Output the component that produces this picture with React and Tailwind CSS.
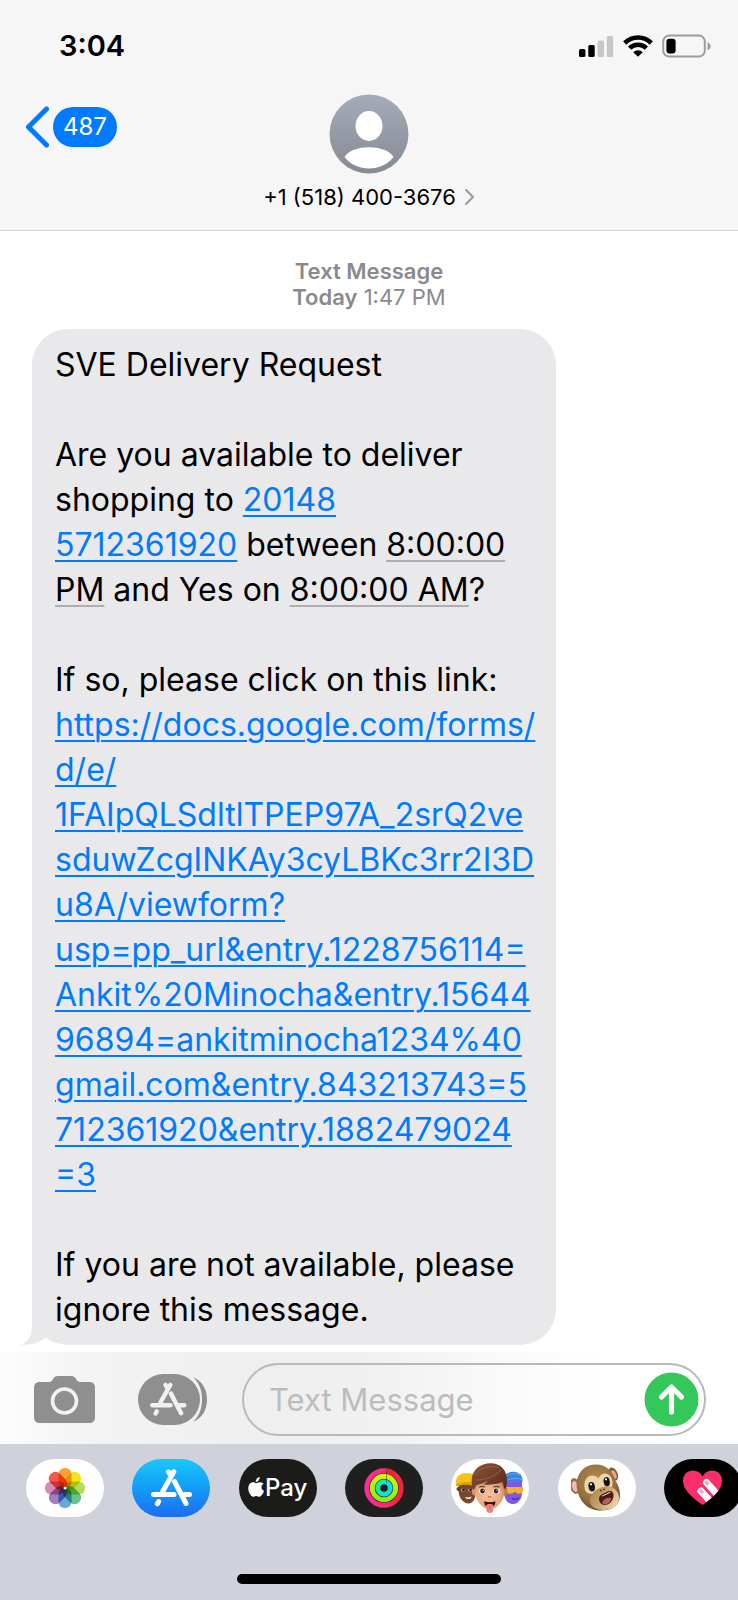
import React from "react";

const MESSAGE_LINK = [
  "https://docs.google.com/forms/",
  "d/e/",
  "1FAIpQLSdltlTPEP97A_2srQ2ve",
  "sduwZcgINKAy3cyLBKc3rr2I3D",
  "u8A/viewform?",
  "usp=pp_url&entry.1228756114=",
  "Ankit%20Minocha&entry.15644",
  "96894=ankitminocha1234%40",
  "gmail.com&entry.843213743=5",
  "712361920&entry.1882479024",
  "=3",
];

const LINK = "text-[#007aff] underline decoration-2 underline-offset-4";
const DATE_LINK = "underline decoration-2 underline-offset-4 decoration-[#aeaeb0]";

function StatusBar() {
  return (
    <div className="flex items-center justify-between pl-[59px] pr-[27px] pt-[30px]">
      <time className="text-[29px] leading-[32px] font-semibold">3:04</time>
      <div className="flex items-center gap-[9px]">
        <svg width="36" height="24" viewBox="0 0 36 24" aria-hidden="true">
          <rect x="1" y="15" width="6.4" height="8" rx="1.6" fill="#000" />
          <rect x="10.3" y="11" width="6.4" height="12" rx="1.6" fill="#000" />
          <rect x="19.6" y="6.5" width="6.4" height="16.5" rx="1.6" fill="#c6c6c7" />
          <rect x="28.8" y="2" width="6.4" height="21" rx="1.6" fill="#c6c6c7" />
        </svg>
        <svg width="30" height="24" viewBox="0 0 30 24" aria-hidden="true">
          <g fill="none" stroke="#000" strokeWidth="4.6">
            <path d="M1.7 9a19 19 0 0 1 26.6 0" />
            <path d="M6.600 14.200a12 12 0 0 1 16.800 0" />
          </g>
          <path d="M15 22.800l-4.800-4.600a6.900 6.900 0 0 1 9.600 0z" fill="#000" />
        </svg>
        <svg width="49" height="24" viewBox="0 0 49 24" aria-hidden="true">
          <rect x="1.2" y="1.6" width="41.600" height="21" rx="6" fill="none" stroke="#9c9c9d" strokeWidth="2" />
          <rect x="4.400" y="4.700" width="9.200" height="14.800" rx="3" fill="#000" />
          <path d="M45.600 8.200c2 .8 3 2.200 3 4s-1 3.200-3 4z" fill="#9c9c9d" />
        </svg>
      </div>
    </div>
  );
}

function ConversationHeader() {
  return (
    <header className="border-b border-[#d2d2d3] bg-[#f6f6f6]">
      <StatusBar />
      <div className="grid grid-cols-[1fr_auto_1fr] items-start pt-8 pb-[18px]">
        <button type="button" className="ml-[25px] mt-3 flex items-center gap-1 justify-self-start text-white">
          <svg width="24" height="42" viewBox="0 0 24 42" aria-hidden="true">
            <path d="M21.500 3L3.500 21l18 18" fill="none" stroke="#007aff" strokeWidth="5" strokeLinecap="round" strokeLinejoin="round" />
          </svg>
          <span className="rounded-full bg-[#007aff] px-[10px] text-[24px] leading-[40px]">487</span>
        </button>
        <button type="button" className="flex flex-col items-center gap-2">
          <svg width="80" height="80" viewBox="0 0 80 80" aria-hidden="true">
            <defs>
              <linearGradient id="avatar" x1="0" y1="0" x2="0" y2="1">
                <stop offset="0" stopColor="#a5abb9" />
                <stop offset="1" stopColor="#858a93" />
              </linearGradient>
            </defs>
            <circle cx="40" cy="40" r="39.500" fill="url(#avatar)" />
            <ellipse cx="40" cy="32" rx="13.500" ry="15" fill="#fff" />
            <path d="M15.500 63c4-6.500 13.500-9.800 24.500-9.800S60.500 56.500 64.500 63C58.500 70.500 50 74.500 40 74.500S21.500 70.500 15.500 63z" fill="#fff" />
          </svg>
          <span className="flex items-center gap-2 text-[22px] leading-[30px]">
            +1 (518) 400-3676
            <svg width="11" height="18" viewBox="0 0 11 18" aria-hidden="true">
              <path d="M2 2l7 7-7 7" fill="none" stroke="#9a9a9c" strokeWidth="2" strokeLinecap="round" strokeLinejoin="round" />
            </svg>
          </span>
        </button>
      </div>
    </header>
  );
}

function Bubble() {
  return (
    <article className="relative ml-8 w-[524px] rounded-[36px] bg-[#e9e9eb] py-[13px] pl-[23px] text-[32px] leading-[45px] whitespace-nowrap">
      <svg className="absolute bottom-0 -left-[11px]" width="50" height="40" viewBox="0 0 50 40" aria-hidden="true">
        <path d="M11 0v20c0 10-3 17-11 19.500 9 1 18-1.500 24-6.500 8 5 16 7 26 7V0z" fill="#e9e9eb" />
        <path d="M11 40h39c-10 0-18-2-25-7-5 4-9 6-14 7z" fill="#fff" />
      </svg>
      <p className="relative">SVE Delivery Request</p>
      <p className="relative pt-[45px]">
        Are you available to deliver
        <br />
        shopping to{" "}
        <a href="tel:201485712361920" className={LINK}>
          20148
          <br />
          5712361920
        </a>{" "}
        between{" "}
        <a href="#evening" className={DATE_LINK}>
          8:00:00
          <br />
          PM
        </a>{" "}
        and Yes on{" "}
        <a href="#morning" className={DATE_LINK}>
          8:00:00 AM
        </a>
        ?
      </p>
      <p className="relative pt-[45px]">
        If so, please click on this link:
        <br />
        <a href={MESSAGE_LINK.join("")} className={LINK}>
          {MESSAGE_LINK.map((line) => (
            <React.Fragment key={line}>
              {line}
              <br />
            </React.Fragment>
          ))}
        </a>
      </p>
      <p className="relative pt-[45px]">
        If you are not available, please
        <br />
        ignore this message.
      </p>
    </article>
  );
}

function StoreGlyph({ color }) {
  return (
    <g fill="none" stroke={color} strokeWidth="5" strokeLinecap="round">
      <path d="M17.500 2.800L19.600 6.200" />
      <path d="M22.800 2.800L11.800 22.300" />
      <path d="M2.500 25.500H23" />
      <path d="M33.500 25.500H38.500" />
      <path d="M7.600 32.500L6.300 34.800" />
      <path d="M23.500 12.500L35 34.500" />
    </g>
  );
}

function Composer() {
  return (
    <form
      className="flex items-center bg-[linear-gradient(90deg,#fdfdfd_0%,#f3f3f3_12%,#efefef_35%,#f1f1f1_52%,#fafafa_68%,#ffffff_82%)] pt-[11px] pb-2 pl-[34px] pr-8"
      onSubmit={(e) => e.preventDefault()}
    >
      <button type="button" aria-label="Camera">
        <svg width="61" height="48" viewBox="0 0 61 48">
          <path d="M6 6h9c2 0 3-1 4-3s2.500-3 5-3h13c2.500 0 4 1 5 3s2 3 4 3h9c4 0 6 2 6 6v29c0 4-2 6-6 6H6c-4 0-6-2-6-6V12c0-4 2-6 6-6z" fill="#8f8f8f" />
          <circle cx="30.500" cy="25" r="12" fill="none" stroke="#f2f2f2" strokeWidth="3.600" />
        </svg>
      </button>
      <button type="button" aria-label="Apps" className="ml-[43px]">
        <svg width="70" height="51" viewBox="0 0 70 51">
          <rect x="0" y="0" width="62" height="51" rx="25.500" fill="#8f8f8f" />
          <path d="M55 3C64 7 69 15 69 25.500S64 44 55 48c6-6 9-13 9-22.500S61 9 55 3z" fill="#8f8f8f" />
          <g transform="translate(12 8.500) scale(.89)">
            <StoreGlyph color="#f1f1f1" />
          </g>
        </svg>
      </button>
      <div className="ml-[34px] flex min-w-0 flex-1 items-center rounded-full border-2 border-[#b9b9bb] py-[7px] pl-[25px] pr-[5px]">
        <input
          type="text"
          aria-label="Text Message"
          placeholder="Text Message"
          className="min-w-0 flex-1 bg-transparent text-[31px] leading-[40px] outline-none placeholder:text-[#bcbcbe]"
        />
        <button type="submit" aria-label="Send">
          <svg width="55" height="55" viewBox="0 0 55 55">
            <circle cx="27.500" cy="27.500" r="27" fill="#34c759" />
            <path d="M27.500 40V15.500M17.500 25L27.500 15l10 10" fill="none" stroke="#fff" strokeWidth="5.200" strokeLinecap="round" strokeLinejoin="round" />
          </svg>
        </button>
      </div>
    </form>
  );
}

const PETALS = [
  ["#f8a130", 0],
  ["#f0e420", 45],
  ["#b8da58", 90],
  ["#66c290", 135],
  ["#64a8de", 180],
  ["#9c80c0", 225],
  ["#d68cb2", 270],
  ["#f25a4a", 315],
];

function Photos() {
  return (
    <svg width="42" height="42" viewBox="-21 -21 42 42" className="isolate">
      {PETALS.map(([color, angle]) => (
        <rect key={angle} x="-6.500" y="-20" width="13" height="20" rx="6" fill={color} transform={`rotate(${angle})`} className="mix-blend-multiply" />
      ))}
      <circle r="1.500" fill="#fff" />
    </svg>
  );
}

function Store() {
  return (
    <svg width="41" height="38" viewBox="0 0 41 38">
      <StoreGlyph color="#fff" />
    </svg>
  );
}

function ApplePay() {
  return (
    <span className="flex items-center text-[24px] leading-[30px] font-medium text-white">
      <svg width="17" height="20" viewBox="0 0 17 20" aria-hidden="true" className="mb-[3px]">
        <path
          d="M11.700 0c.2 1.300-.3 2.500-1.100 3.500C9.800 4.400 8.800 5 7.700 4.900c-.1-1.200.4-2.400 1.100-3.300C9.600.7 10.800.1 11.700 0zM15.600 6.800c-1.300.8-2.100 2-2.100 3.500 0 1.700 1 3.100 2.600 3.700-.4 1.200-1 2.300-1.700 3.300-.8 1.100-1.700 2.400-3 2.400s-1.700-.8-3.100-.8-1.900.8-3.100.8-2.200-1.200-3.100-2.400C.4 14.800-.5 10.500 1.100 7.700 2 6.200 3.400 5.300 5 5.300c1.300 0 2.500.9 3.300.9s2.200-1.100 3.900-.9c1.400.1 2.600.6 3.400 1.500z"
          fill="#fff"
        />
      </svg>
      Pay
    </span>
  );
}

function Rings() {
  return (
    <svg width="40" height="40" viewBox="0 0 40 40">
      <defs>
        <linearGradient id="ringRed" x1="0" x2="1">
          <stop offset="0" stopColor="#fb2d9c" />
          <stop offset=".5" stopColor="#f92a78" />
          <stop offset="1" stopColor="#f0263a" />
        </linearGradient>
        <linearGradient id="ringGreen" x1="0" y1="0" x2="0" y2="1">
          <stop offset="0" stopColor="#cdf80a" />
          <stop offset="1" stopColor="#8eea12" />
        </linearGradient>
        <linearGradient id="ringBlue" x1="0" x2="1">
          <stop offset="0" stopColor="#12f0a8" />
          <stop offset="1" stopColor="#12d9ec" />
        </linearGradient>
      </defs>
      <g fill="none" strokeWidth="4.900">
        <circle cx="20" cy="20" r="17.200" stroke="url(#ringRed)" />
        <circle cx="20" cy="20" r="11.700" stroke="url(#ringGreen)" />
        <circle cx="20" cy="20" r="6.200" stroke="url(#ringBlue)" />
      </g>
      <path d="M22.500 .6A19.600 19.600 0 0 1 33 5.400L29.600 8.900A14.800 14.800 0 0 0 22.500 5.500z" fill="#f0222c" />
      <path d="M22.500 .4v14.500" stroke="#1f3a20" strokeOpacity=".5" />
    </svg>
  );
}

function Memoji() {
  return (
    <svg width="70" height="52" viewBox="0 0 70 52">
      <defs>
        <linearGradient id="hair" x1="0" y1="0" x2="1" y2="1">
          <stop offset="0" stopColor="#8a5138" />
          <stop offset=".5" stopColor="#74402b" />
          <stop offset="1" stopColor="#4e2718" />
        </linearGradient>
        <radialGradient id="skin" cx=".45" cy=".5" r=".6">
          <stop offset="0" stopColor="#f6c39c" />
          <stop offset=".7" stopColor="#e8aa7e" />
          <stop offset="1" stopColor="#c98256" />
        </radialGradient>
      </defs>
      <path d="M3.500 22h17v10c0 5-3 9.500-7 9.500-5 0-10-6-10-13z" fill="#78462c" />
      <circle cx="3.500" cy="27" r="2" fill="#6b3d25" />
      <path d="M1 23.500C-.5 15 5 11 12 11c6 0 9 3 9 8v6C14 20.500 8 20.500 1 23.500z" fill="#f6c414" />
      <path d="M1 22.500c6-3 14-3 20-1v3c-7-2-13-2.500-20 0z" fill="#dca40c" />
      <ellipse cx="8.200" cy="28" rx="2" ry="1.600" fill="#f6efe8" />
      <ellipse cx="15.200" cy="28" rx="2" ry="1.600" fill="#f6efe8" />
      <circle cx="8.500" cy="28" r="1.400" fill="#20130c" />
      <circle cx="15.500" cy="28" r="1.400" fill="#20130c" />
      <path d="M10 35c3 .8 5 .6 6.500-.8 0 3.500-5 3.800-6.500.8z" fill="#fff" />
      <path d="M49 14c4-5 17-4 18 4v13c0 6-4 11-9 11-6 0-9-6-9-12z" fill="#7c5ae2" />
      <path d="M49 17c0-9 17-10 18.500 0v3H49z" fill="#3b80e4" />
      <path d="M52 14c4-3 9-3 14-1M53 18c4-2 9-2 14-1" stroke="#6aaaf8" fill="none" />
      <path d="M50 25h18v4.500c-2 3-6 3-8 0-3 3-7 3-10 0z" fill="#f8b127" />
      <path d="M57 36.500q4 2 7-1" stroke="#4d2fb0" strokeWidth="1.500" fill="none" />
      <ellipse cx="19.500" cy="29.500" rx="2.600" ry="4" fill="#d8946a" />
      <ellipse cx="50" cy="29.500" rx="2.400" ry="4" fill="#c27850" />
      <path d="M20 19h29.500v10c0 5-2 9.500-5.500 13.500-2.500 3-5.500 4.500-9.200 4.500s-6.700-1.500-9.300-4.500C22 38.500 20 34 20 29z" fill="url(#skin)" />
      <path d="M18.500 28C15 20 16.500 11 22 6 29 0 42-.5 47.500 6c5 5 5.500 14 3 21.500l-1.800-2c0-2-.5-4-1.700-5.500C41 22.500 35 23 28 22.500c2-.8 3.500-1.800 4.500-3.500-4 2.500-8 3.500-11.200 4-.8 1.500-1 3-2.800 5z" fill="url(#hair)" />
      <path d="M20 13C24 6 34 3 44 5.500M21 18c8 0 19-3 25-10" stroke="#986046" fill="none" />
      <path d="M24 25.300q3-1.600 6-.4M38.500 24.900q3-1.200 6 .4" stroke="#6b3a22" strokeWidth="1.100" fill="none" />
      <ellipse cx="27.200" cy="29" rx="3.300" ry="2.700" fill="#fff" />
      <ellipse cx="41.400" cy="29" rx="3.300" ry="2.700" fill="#fff" />
      <circle cx="27.500" cy="29" r="2.400" fill="#3c2013" />
      <circle cx="41.100" cy="29" r="2.400" fill="#3c2013" />
      <circle cx="28.300" cy="28.200" r=".6" fill="#fff" />
      <circle cx="41.900" cy="28.200" r=".6" fill="#fff" />
      <path d="M32.800 34.500q1.800 1.200 3.600 0" stroke="#b87048" strokeWidth="1.200" fill="none" />
      <path d="M29.300 39.300q5.700 1.800 11 0c.2 4-1.800 6-5.500 6s-5.700-2-5.500-6z" fill="#3c0f0d" />
      <path d="M31.300 43c.8-1.300 6.200-1.300 7 0v4.700c0 4.300-7 4.300-7 0z" fill="#f27f7d" />
      <path d="M34.800 43.500v4" stroke="#d25e60" strokeWidth=".8" />
    </svg>
  );
}

function Monkey() {
  return (
    <svg width="52" height="50" viewBox="0 0 52 50">
      <defs>
        <radialGradient id="fur" cx=".45" cy=".35" r=".65">
          <stop offset="0" stopColor="#b08a56" />
          <stop offset=".7" stopColor="#94703f" />
          <stop offset="1" stopColor="#6d4f2a" />
        </radialGradient>
        <linearGradient id="muzzle" x1="0" y1=".3" x2="1" y2=".8">
          <stop offset="0" stopColor="#a9854f" />
          <stop offset=".45" stopColor="#c9a670" />
          <stop offset="1" stopColor="#f0dcb4" />
        </linearGradient>
      </defs>
      <ellipse cx="4" cy="23" rx="5" ry="8" fill="#93703f" transform="rotate(-12 4 23)" />
      <ellipse cx="4" cy="23.500" rx="3" ry="5.600" fill="#f3b8b8" transform="rotate(-12 4 23.500)" />
      <ellipse cx="42.500" cy="11" rx="4" ry="7" fill="#7f5e35" transform="rotate(-24 42.500 11)" />
      <ellipse cx="43" cy="11.500" rx="2" ry="4.500" fill="#eda7a3" transform="rotate(-24 43 11.500)" />
      <path d="M6 26C4 12 12 2 24 1.500c11-.5 18 7 20.500 16C48 23 50 30 48.500 36c-2 8-10 12-20 11.500C16 47 8 38 6 26z" fill="url(#fur)" />
      <path d="M14 27c-2-8 1-14 7-14.500 3 0 5 1 6.500 3 1-3 3.500-5 6.500-5 5 0 8 5 7.500 11-.3 3-3 5-8 7-7 3-18 4-19.500-1.500z" fill="#ecd5a8" />
      <path d="M22 30c3-4 8-6 12-6.500 5-.8 9 1 12 5 3.500 5 2.500 12-3 15.500-6 4-16 4-21 0-4.500-4-4-9.500 0-14z" fill="url(#muzzle)" />
      <ellipse cx="20.700" cy="23.700" rx="3.200" ry="4.700" fill="#171412" transform="rotate(-10 20.700 23.700)" />
      <ellipse cx="35.700" cy="18.700" rx="3.100" ry="4.600" fill="#171412" transform="rotate(-10 35.700 18.700)" />
      <circle cx="20" cy="21.300" r="1.100" fill="#fff" />
      <circle cx="35" cy="16.300" r="1.100" fill="#fff" />
      <ellipse cx="29.800" cy="27.500" rx="1.100" ry=".9" fill="#5a3d22" />
      <ellipse cx="33" cy="26.300" rx="1.100" ry=".9" fill="#5a3d22" />
      <path d="M28 35.500c0-3.500 4-4.500 7.500-6.500 4-2.300 7.500-.5 7 4-.7 5.500-4.500 9-8.500 9-3.500 0-6-2.500-6-6.500z" fill="#4c1b18" />
      <path d="M31 39.500c2-4 6.500-6 9.500-4-1.300 3.800-3.800 6-6.500 6-1.300 0-2.200-.8-3-2z" fill="#b8605c" />
      <path d="M31 32.800l7.500-3.700 1.200.3-8.500 4.200z" fill="#f4ece2" />
    </svg>
  );
}

function Heart() {
  return (
    <svg width="42" height="38" viewBox="0 0 42 38">
      <defs>
        <clipPath id="heartShape">
          <path d="M20.500 36C8 27 1 20 1 11.500 1 5.500 5.500 1.500 11 1.500c4 0 7.500 2 9.500 6 2-4 5.500-6 9.500-6 5.500 0 10 4 10 10C40 20 33 27 20.500 36z" />
        </clipPath>
      </defs>
      <g clipPath="url(#heartShape)">
        <rect width="42" height="38" fill="#fb2d6b" />
        <g transform="rotate(-42 19 22)">
          <rect x="15.500" y="18.500" width="7" height="26" rx="3.500" fill="#fff" />
          <rect x="17.200" y="20" width="3.600" height="5" rx="1.800" fill="#fba5bd" />
        </g>
        <g transform="rotate(-42 24.500 13.500)">
          <rect x="21" y="10" width="7" height="30" rx="3.500" fill="#fff" />
          <rect x="22.700" y="11.500" width="3.600" height="5" rx="1.800" fill="#fba5bd" />
        </g>
      </g>
    </svg>
  );
}

const APPS = [
  { name: "Photos", Icon: Photos, bg: "bg-white" },
  { name: "App Store", Icon: Store, bg: "bg-linear-to-b from-[#1cc8fb] to-[#1f6bf0]" },
  { name: "Apple Pay", Icon: ApplePay, bg: "bg-[#1b1b19]" },
  { name: "Activity", Icon: Rings, bg: "bg-[#1f1f1f]" },
  { name: "Memoji Stickers", Icon: Memoji, bg: "bg-white" },
  { name: "Animoji", Icon: Monkey, bg: "bg-white" },
  { name: "Digital Touch", Icon: Heart, bg: "bg-black" },
];

function AppDrawer() {
  return (
    <footer className="overflow-hidden bg-[#cfd2da] pt-[15px] pb-4">
      <nav className="ml-[26px] -mr-1 flex justify-between">
        {APPS.map(({ name, Icon, bg }) => (
          <button key={name} type="button" aria-label={name} className={`flex h-[58px] w-[78px] shrink-0 items-center justify-center rounded-full ${bg}`}>
            <Icon />
          </button>
        ))}
      </nav>
      <div className="mx-auto mt-[57px] h-[10px] w-[264px] rounded-full bg-black" />
    </footer>
  );
}

export default function App() {
  return (
    <div className="flex min-h-screen flex-col overflow-hidden bg-white font-[Inter,sans-serif] text-black">
      <ConversationHeader />
      <main className="flex-1 pt-[27px] pb-[7px]">
        <div className="mb-[19px] text-center text-[22px] leading-[26px] text-[#8a8a8e]">
          <p className="font-semibold">Text Message</p>
          <p>
            <span className="font-semibold">Today</span> 1:47 PM
          </p>
        </div>
        <Bubble />
      </main>
      <Composer />
      <AppDrawer />
    </div>
  );
}
